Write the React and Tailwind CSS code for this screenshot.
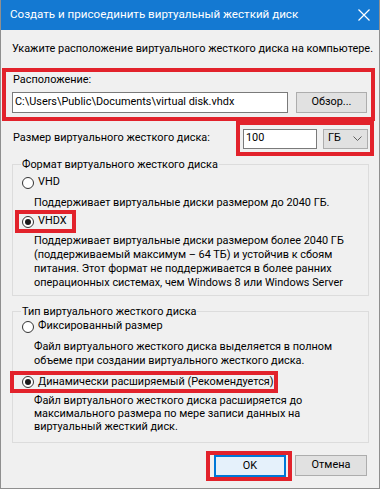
const font = { fontFamily: 'Roboto, "Noto Sans", sans-serif' };

function Radio({ checked }) {
  return (
    <span className="flex h-[12px] w-[12px] shrink-0 items-center justify-center rounded-full border border-[#333333] bg-white">
      {checked && <span className="h-[6px] w-[6px] rounded-full bg-[#1a1a1a]" />}
    </span>
  );
}

function Chevron() {
  return (
    <svg width="9" height="5" viewBox="0 0 9 5" fill="none">
      <path d="M0.5 0.5 L4.5 4.5 L8.5 0.5" stroke="#606060" strokeWidth="1" />
    </svg>
  );
}

export default function App() {
  return (
    <div
      style={font}
      className="flex h-[489px] w-[380px] flex-col overflow-hidden whitespace-nowrap border-x border-b border-[#8f8f8f] bg-[#f0f0f0] text-[10.9px] text-black"
    >
      <header className="flex h-[30px] shrink-0 items-center justify-between bg-[#1479d2] pl-[9px] pr-[9px] text-[11.6px] text-white">
        <span>Создать и присоединить виртуальный жесткий диск</span>
        <svg width="12" height="12" viewBox="0 0 12 12">
          <path d="M0.5 0.5 L11.5 11.5 M11.5 0.5 L0.5 11.5" stroke="white" strokeWidth="1.2" />
        </svg>
      </header>

      <p className="mt-[11px] h-[15px] pl-[11px] leading-[15px]">
        Укажите расположение виртуального жесткого диска на компьютере.
      </p>

      <div className="ml-[1px] mt-[12px] h-[53px] w-[373px] shrink-0 border-[4px] border-[#e2222b]">
        <div className="h-[15px] pl-[7px] leading-[15px]">Расположение:</div>
        <div className="mt-[5px] flex">
          <div className="ml-[6px] flex h-[21px] w-[276px] items-center border border-[#7a7a7a] bg-white pl-[2px]">
            C:\Users\Public\Documents\virtual disk.vhdx
          </div>
          <button className="ml-[8px] h-[21px] w-[71px] border border-[#adadad] bg-[#e1e1e1] font-normal">
            Обзор...
          </button>
        </div>
      </div>

      <div className="flex h-[35px] shrink-0 items-center">
        <span className="pl-[12px]">Размер виртуального жесткого диска:</span>
        <div className="ml-auto mr-[5px] flex h-[35px] w-[138px] items-center border-[4px] border-[#e2222b]">
          <div className="ml-[3px] flex h-[20px] w-[74px] items-center border border-[#7a7a7a] bg-white pl-[2px]">
            100
          </div>
          <div className="ml-[6px] flex h-[20px] w-[45px] items-center justify-between border border-[#adadad] bg-[#e1e1e1] pl-[4px] pr-[5px]">
            <span>ГБ</span>
            <Chevron />
          </div>
        </div>
      </div>

      <fieldset className="ml-[11px] mt-[1px] w-[357px] shrink-0 border border-[#dcdcdc] pb-[5px]">
        <legend className="ml-[8px] px-[1px] leading-[15px]">Формат виртуального жесткого диска</legend>
        <div className="mt-[3px] flex h-[15px] items-center gap-[4px] pl-[9px]">
          <Radio />
          <span>VHD</span>
        </div>
        <p className="mt-[5px] pl-[21px] leading-[15px]">
          Поддерживает виртуальные диски размером до 2040 ГБ.
        </p>
        <div className="ml-[2px] flex h-[23px] w-[61px] items-center gap-[4px] border-[4px] border-[#e2222b] pl-[3px]">
          <Radio checked />
          <span>VHDX</span>
        </div>
        <p className="mt-[1px] pl-[21px] leading-[14px]">
          Поддерживает виртуальные диски размером более 2040 ГБ
          <br />
          (поддерживаемый максимум – 64 ТБ) и устойчив к сбоям
          <br />
          питания. Этот формат не поддерживается в более ранних
          <br />
          операционных системах, чем Windows 8 или Windows Server
        </p>
      </fieldset>

      <fieldset className="ml-[11px] mt-[8px] w-[357px] shrink-0 border border-[#dcdcdc] pb-[9px]">
        <legend className="ml-[8px] px-[1px] leading-[15px]">Тип виртуального жесткого диска</legend>
        <div className="flex h-[15px] items-center gap-[4px] pl-[9px]">
          <Radio />
          <span>Фиксированный размер</span>
        </div>
        <p className="mt-[6px] pl-[21px] leading-[14px]">
          Файл виртуального жесткого диска выделяется в полном
          <br />
          объеме при создании виртуального жесткого диска.
        </p>
        <div className="-ml-[3px] mt-[3px] flex h-[22px] w-[268px] items-center gap-[4px] border-[4px] border-[#e2222b] pl-[8px]">
          <Radio checked />
          <span>Динамически расширяемый (Рекомендуется)</span>
        </div>
        <p className="mt-[1px] pl-[21px] leading-[13px]">
          Файл виртуального жесткого диска расширяется до
          <br />
          максимального размера по мере записи данных на
          <br />
          виртуальный жесткий диск.
        </p>
      </fieldset>

      <div className="mt-[8px] flex shrink-0">
        <div className="ml-[205px] flex h-[30px] w-[86px] items-center border-[4px] border-[#e2222b] pl-[4px]">
          <button className="h-[22px] w-[72px] border border-[#0078d7] bg-[#e5f1fb] font-normal shadow-[inset_0_0_0_1px_#0078d7]">
            OK
          </button>
        </div>
        <button className="ml-[3px] mt-[4px] h-[21px] w-[72px] border border-[#adadad] bg-[#e1e1e1] font-normal">
          Отмена
        </button>
      </div>
    </div>
  );
}
